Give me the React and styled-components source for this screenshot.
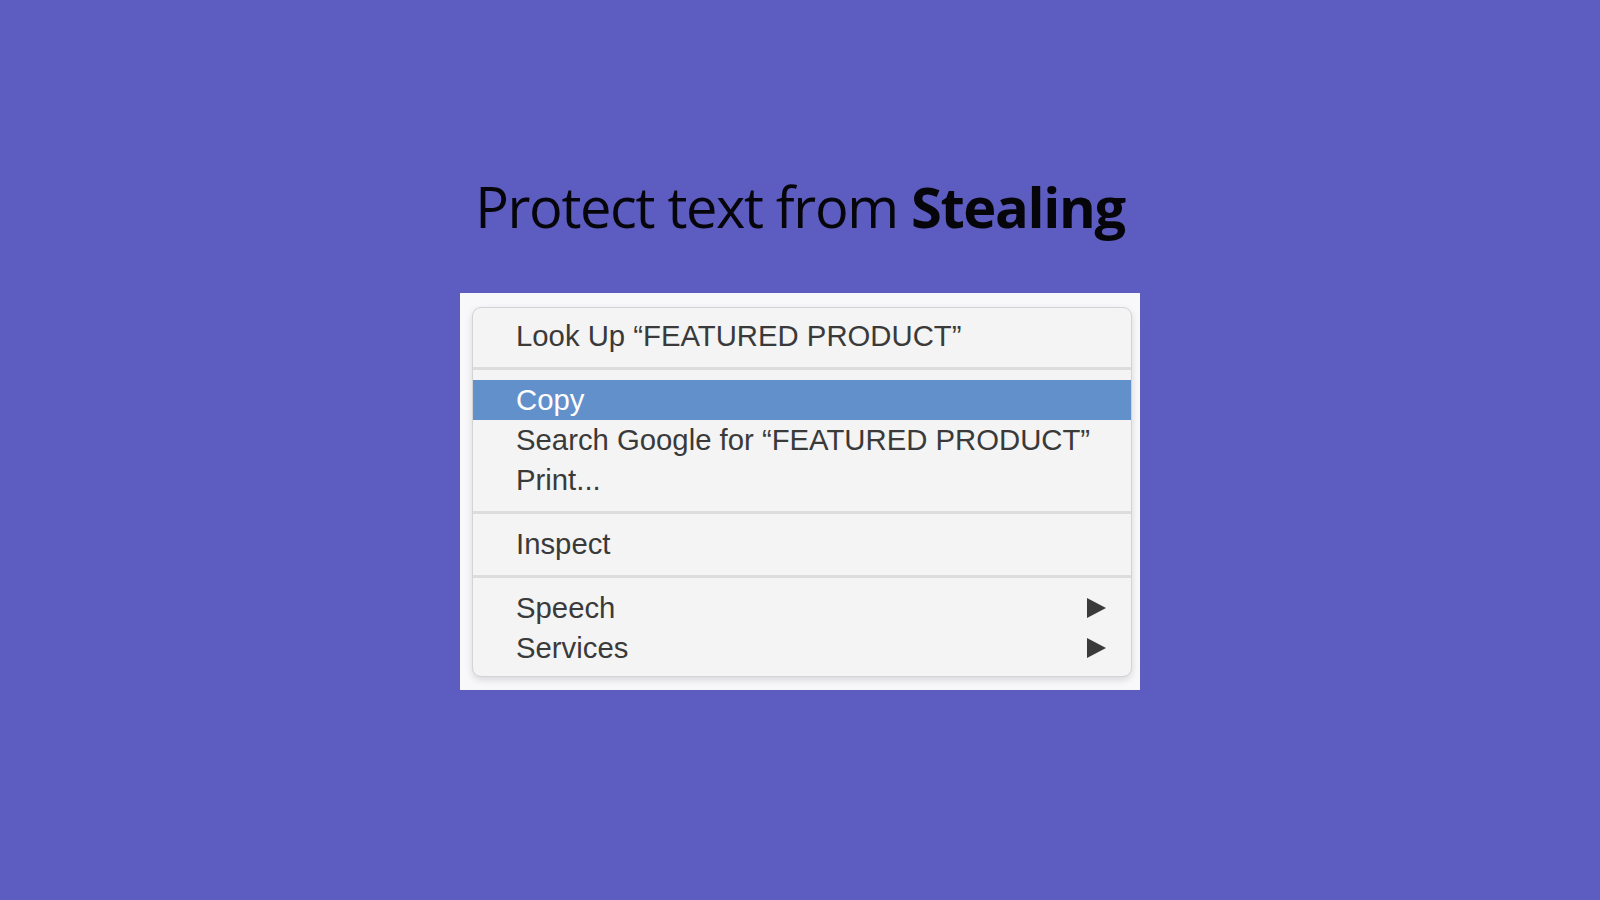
import React from 'react'
import styled, { createGlobalStyle } from 'styled-components'

const GlobalStyle = createGlobalStyle`
    html, body{
        margin:0;
        padding:0;
        background:#5d5dc1;
    }
    *{
        box-sizing:border-box;
    }
`

const Page = styled.main`
    width:1600px;
    height:900px;
    background:#5d5dc1;
    display:flex;
    flex-direction:column;
    align-items:center;
    padding-top:166px;
`

const Title = styled.h1`
    margin:0;
    font-family:'Open Sans', 'Noto Sans', sans-serif;
    font-weight:400;
    font-size:56px;
    line-height:80px;
    letter-spacing:-1.35px;
    color:#06060a;
    white-space:nowrap;

    strong{
        font-weight:700;
    }
`

const Frame = styled.section`
    margin-top:47px;
    width:680px;
    background:#f8f8fa;
    padding:14px 8px 13px 12px;
`

const Menu = styled.ul`
    list-style:none;
    margin:0;
    padding:8px 0;
    background:#f4f4f4;
    border:1px solid #d3d3d3;
    border-radius:9px;
    box-shadow:0 3px 7px rgba(0,0,0,0.13);
    font-family:'Liberation Sans', Arial, sans-serif;
    font-size:29.3px;
`

const Item = styled.li`
    height:40px;
    line-height:40px;
    padding:0 25px 0 43px;
    display:flex;
    align-items:center;
    justify-content:space-between;
    color:${props => props.$active ? '#ffffff' : '#3a3a3a'};
    background:${props => props.$active ? '#6290cb' : 'transparent'};
    white-space:nowrap;
`

const Separator = styled.li`
    height:24px;
    display:flex;
    align-items:center;

    &::after{
        content:'';
        flex:1;
        height:3px;
        background:#dcdcdc;
    }
`

const Arrow = () => (
    <svg width="19" height="20" viewBox="0 0 19 20">
        <polygon points="0,0 19,10 0,20" fill="#3a3a3a" />
    </svg>
)

const App = () => {
    return (
        <Page>
            <GlobalStyle />
            <Title>Protect text from <strong>Stealing</strong></Title>
            <Frame>
                <Menu>
                    <Item>Look Up “FEATURED PRODUCT”</Item>
                    <Separator />
                    <Item $active>Copy</Item>
                    <Item>Search Google for “FEATURED PRODUCT”</Item>
                    <Item>Print...</Item>
                    <Separator />
                    <Item>Inspect</Item>
                    <Separator />
                    <Item>Speech<Arrow /></Item>
                    <Item>Services<Arrow /></Item>
                </Menu>
            </Frame>
        </Page>
    )
}

export default App
